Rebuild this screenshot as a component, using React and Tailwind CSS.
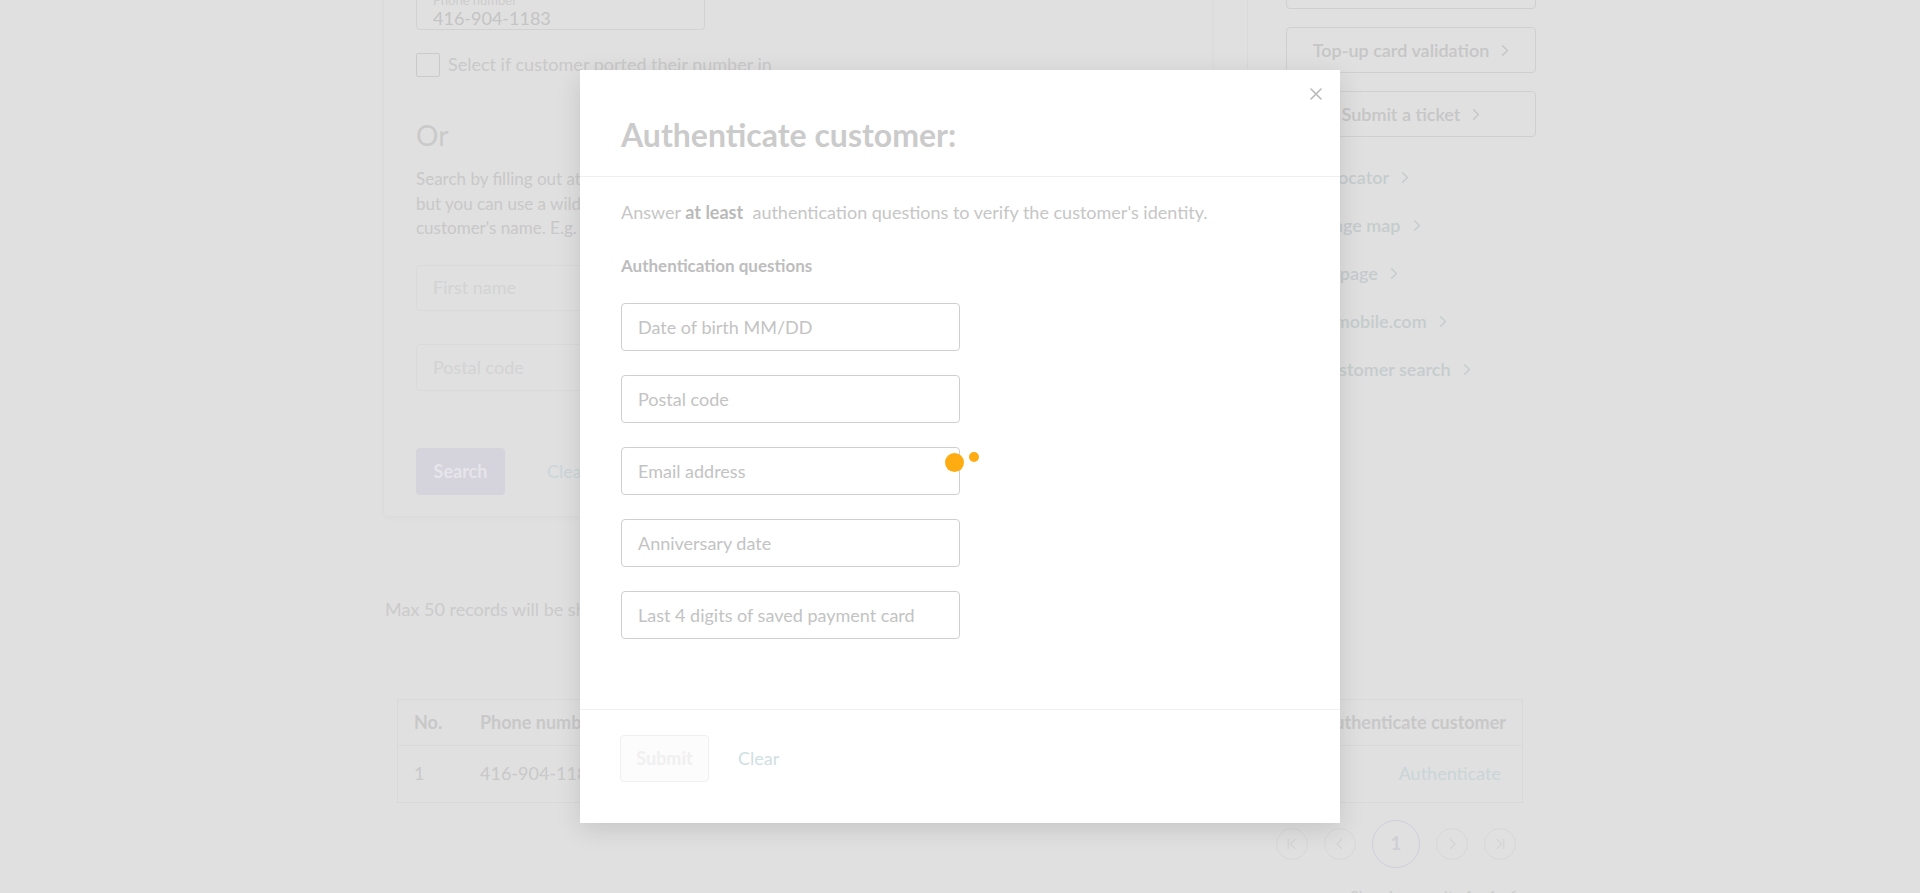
import React from 'react'

const font = { fontFamily: 'Lato, "Open Sans", sans-serif' }

const Chevron = ({ className = '' }) => (
  <svg viewBox="0 0 10 16" className={className} fill="none" stroke="currentColor" strokeWidth="1.8" strokeLinecap="round" strokeLinejoin="round">
    <path d="M2 2l6 6-6 6" />
  </svg>
)

const sideButtons = ['Activate a SIM', 'Top-up card validation', 'Submit a ticket']
const sideLinks = ['Store locator', 'Coverage map', 'Home page', 'publicmobile.com', 'Old customer search']

const questions = [
  'Date of birth MM/DD',
  'Postal code',
  'Email address',
  'Anniversary date',
  'Last 4 digits of saved payment card',
]

const SearchCard = () => (
  <div className="w-[830px] shrink-0 rounded-b border border-t-0 border-[#dbdbdb] px-[32px] pt-[14px] pb-[21px] shadow-[0_2px_6px_rgba(0,0,0,0.02)]">
    <div className="h-[56px] w-[289px] rounded border border-[#d2d2d2] px-[16px] pt-[18px]">
      <div className="text-[13px] leading-[14px] text-[#cdcdcd]">Phone number</div>
      <div className="text-[18px] leading-[22px] text-[#c4c4c4]">416-904-1183</div>
    </div>
    <label className="mt-[21px] flex items-center gap-[8px]">
      <span className="h-[24px] w-[24px] rounded-[2px] border border-[#cacaca]" />
      <span className="text-[18px] text-[#c9c9c9]">Select if customer ported their number in</span>
    </label>
    <div className="mt-[41px] text-[28px] leading-[32px] text-[#cacaca]">Or</div>
    <p className="mt-[16px] text-[17px] leading-[24.5px] text-[#c8c8c8]">
      Search by filling out at least two of the fields below,
      <br />
      but you can use a wildcard (*) at the end of the
      <br />
      customer's name. E.g. Jo* for John.
    </p>
    <div className="mt-[24px] flex h-[46px] w-[289px] items-center rounded border border-[#dadada] px-[16px] text-[18px] text-[#d3d3d3]">
      First name
    </div>
    <div className="mt-[33px] flex h-[47px] w-[289px] items-center rounded border border-[#dadada] px-[16px] text-[18px] text-[#d3d3d3]">
      Postal code
    </div>
    <div className="mt-[57px] flex items-center gap-[42px]">
      <button className="h-[47px] w-[89px] rounded bg-[#d5d3dc] text-[18px] font-bold text-[#e6e5ea]">Search</button>
      <span className="text-[18px] text-[#cad6d9]">Clear</span>
    </div>
  </div>
)

const SideColumn = () => (
  <div className="ml-[34px] border-l border-[#d9d9d9] pl-[38px] pt-[3px]">
    <div className="flex w-[250px] flex-col gap-[18px]">
      {sideButtons.map((b) => (
        <div key={b} className="flex h-[46px] items-center justify-center gap-[12px] rounded border border-[#d0d0d0] text-[18px] font-semibold text-[#c6c6c6]">
          {b}
          <Chevron className="h-[13px] w-[8px]" />
        </div>
      ))}
    </div>
    <div className="mt-[28px] flex flex-col gap-[24px]">
      {sideLinks.map((l) => (
        <div key={l} className="flex h-[24px] items-center gap-[12px] pl-[1px] text-[18px] font-semibold text-[#c5cccd]">
          {l}
          <Chevron className="h-[13px] w-[8px]" />
        </div>
      ))}
    </div>
  </div>
)

const Pager = () => {
  const small = 'flex h-[32px] w-[32px] items-center justify-center rounded-full border border-[#d8d8d8] text-[#d4d4d4]'
  return (
    <div className="mt-[17px] flex items-center justify-end gap-[16px] pr-[7px]">
      <div className={small}>
        <svg viewBox="0 0 16 16" className="h-[12px] w-[12px]" fill="none" stroke="currentColor" strokeWidth="1.8" strokeLinecap="round" strokeLinejoin="round">
          <path d="M3 2v12M12 2L6 8l6 6" />
        </svg>
      </div>
      <div className={small}>
        <svg viewBox="0 0 16 16" className="h-[12px] w-[12px]" fill="none" stroke="currentColor" strokeWidth="1.8" strokeLinecap="round" strokeLinejoin="round">
          <path d="M10 2L4 8l6 6" />
        </svg>
      </div>
      <div className="flex h-[48px] w-[48px] items-center justify-center rounded-full border border-[#d0cfdd] text-[18px] font-bold text-[#cfcfd6]">1</div>
      <div className={small}>
        <svg viewBox="0 0 16 16" className="h-[12px] w-[12px]" fill="none" stroke="currentColor" strokeWidth="1.8" strokeLinecap="round" strokeLinejoin="round">
          <path d="M6 2l6 6-6 6" />
        </svg>
      </div>
      <div className={small}>
        <svg viewBox="0 0 16 16" className="h-[12px] w-[12px]" fill="none" stroke="currentColor" strokeWidth="1.8" strokeLinecap="round" strokeLinejoin="round">
          <path d="M13 2v12M4 2l6 6-6 6" />
        </svg>
      </div>
    </div>
  )
}

const Results = () => (
  <div className="mt-[79px]">
    <p className="ml-[2px] text-[18px] text-[#cbcbcb]">Max 50 records will be shown. Please refine your search if needed.</p>
    <div className="ml-[14px] mt-[76px] w-[1126px] border border-[#d9d9d9] text-[18px]">
      <div className="flex h-[46px] items-center border-b border-[#d9d9d9] px-[16px] font-bold text-[#c8c8c8]">
        <span className="w-[66px]">No.</span>
        <span className="w-[300px]">Phone number</span>
        <span className="flex-1">Customer name</span>
        <span>Authenticate customer</span>
      </div>
      <div className="flex h-[56px] items-center px-[16px] text-[#c9c9c9]">
        <span className="w-[66px]">1</span>
        <span className="w-[300px]">416-904-1183</span>
        <span className="flex-1">John Smith</span>
        <span className="pr-[5px] text-[#c9d5d7]">Authenticate</span>
      </div>
    </div>
    <div className="ml-[14px] w-[1126px]">
      <Pager />
      <p className="ml-[953px] mt-[16px] text-[16px] text-[#cdcdcd]">Showing results 1 - 1 of 1</p>
    </div>
  </div>
)

const AuthModal = () => (
  <div className="absolute left-[580px] top-[70px] flex h-[753px] w-[760px] flex-col bg-white shadow-[0_6px_24px_rgba(0,0,0,0.12)]">
    <button className="absolute right-[17px] top-[17px] text-[#b9b9b9]">
      <svg viewBox="0 0 14 14" className="h-[14px] w-[14px]" fill="none" stroke="currentColor" strokeWidth="1.6" strokeLinecap="round">
        <path d="M2 2l10 10M12 2L2 12" />
      </svg>
    </button>
    <div className="border-b border-[#efefef] px-[41px] pt-[45px] pb-[21px]">
      <h2 className="text-[32px] font-bold leading-[40px] text-[#cbcbcb]">Authenticate customer:</h2>
    </div>
    <div className="relative flex-1 border-b border-[#f0f0f0] px-[41px] pt-[23px]">
      <p className="text-[18px] leading-[24px] text-[#c6c6c6]">
        Answer <span className="font-bold text-[#bababa]">at least</span>&nbsp; authentication questions to verify the customer's identity.
      </p>
      <p className="mt-[31px] text-[17px] font-bold leading-[22px] text-[#bdbdbd]">Authentication questions</p>
      <div className="mt-[26px] flex flex-col gap-[24px]">
        {questions.map((q) => (
          <div key={q} className="flex h-[48px] w-[339px] items-center rounded border border-[#cfcfcf] px-[16px] text-[18px] text-[#c3c3c3]">
            {q}
          </div>
        ))}
      </div>
      <span className="absolute left-[365px] top-[276px] h-[19px] w-[19px] rounded-full bg-[#ffab12]" />
      <span className="absolute left-[389px] top-[275px] h-[10px] w-[10px] rounded-full bg-[#ffab12]" />
    </div>
    <div className="flex items-center gap-[29px] px-[40px] pt-[25px] pb-[41px]">
      <button className="h-[47px] w-[89px] rounded border border-[#f0f0f0] bg-[#fcfcfc] text-[18px] font-bold text-[#f0f0f0]">Submit</button>
      <span className="text-[18px] text-[#cfe0e3]">Clear</span>
    </div>
  </div>
)

export default function App() {
  return (
    <div className="relative h-[893px] w-full overflow-hidden bg-[#e0e0e0]" style={font}>
      <div className="ml-[383px] mt-[-40px]">
        <div className="flex">
          <SearchCard />
          <SideColumn />
        </div>
        <Results />
      </div>
      <AuthModal />
    </div>
  )
}
